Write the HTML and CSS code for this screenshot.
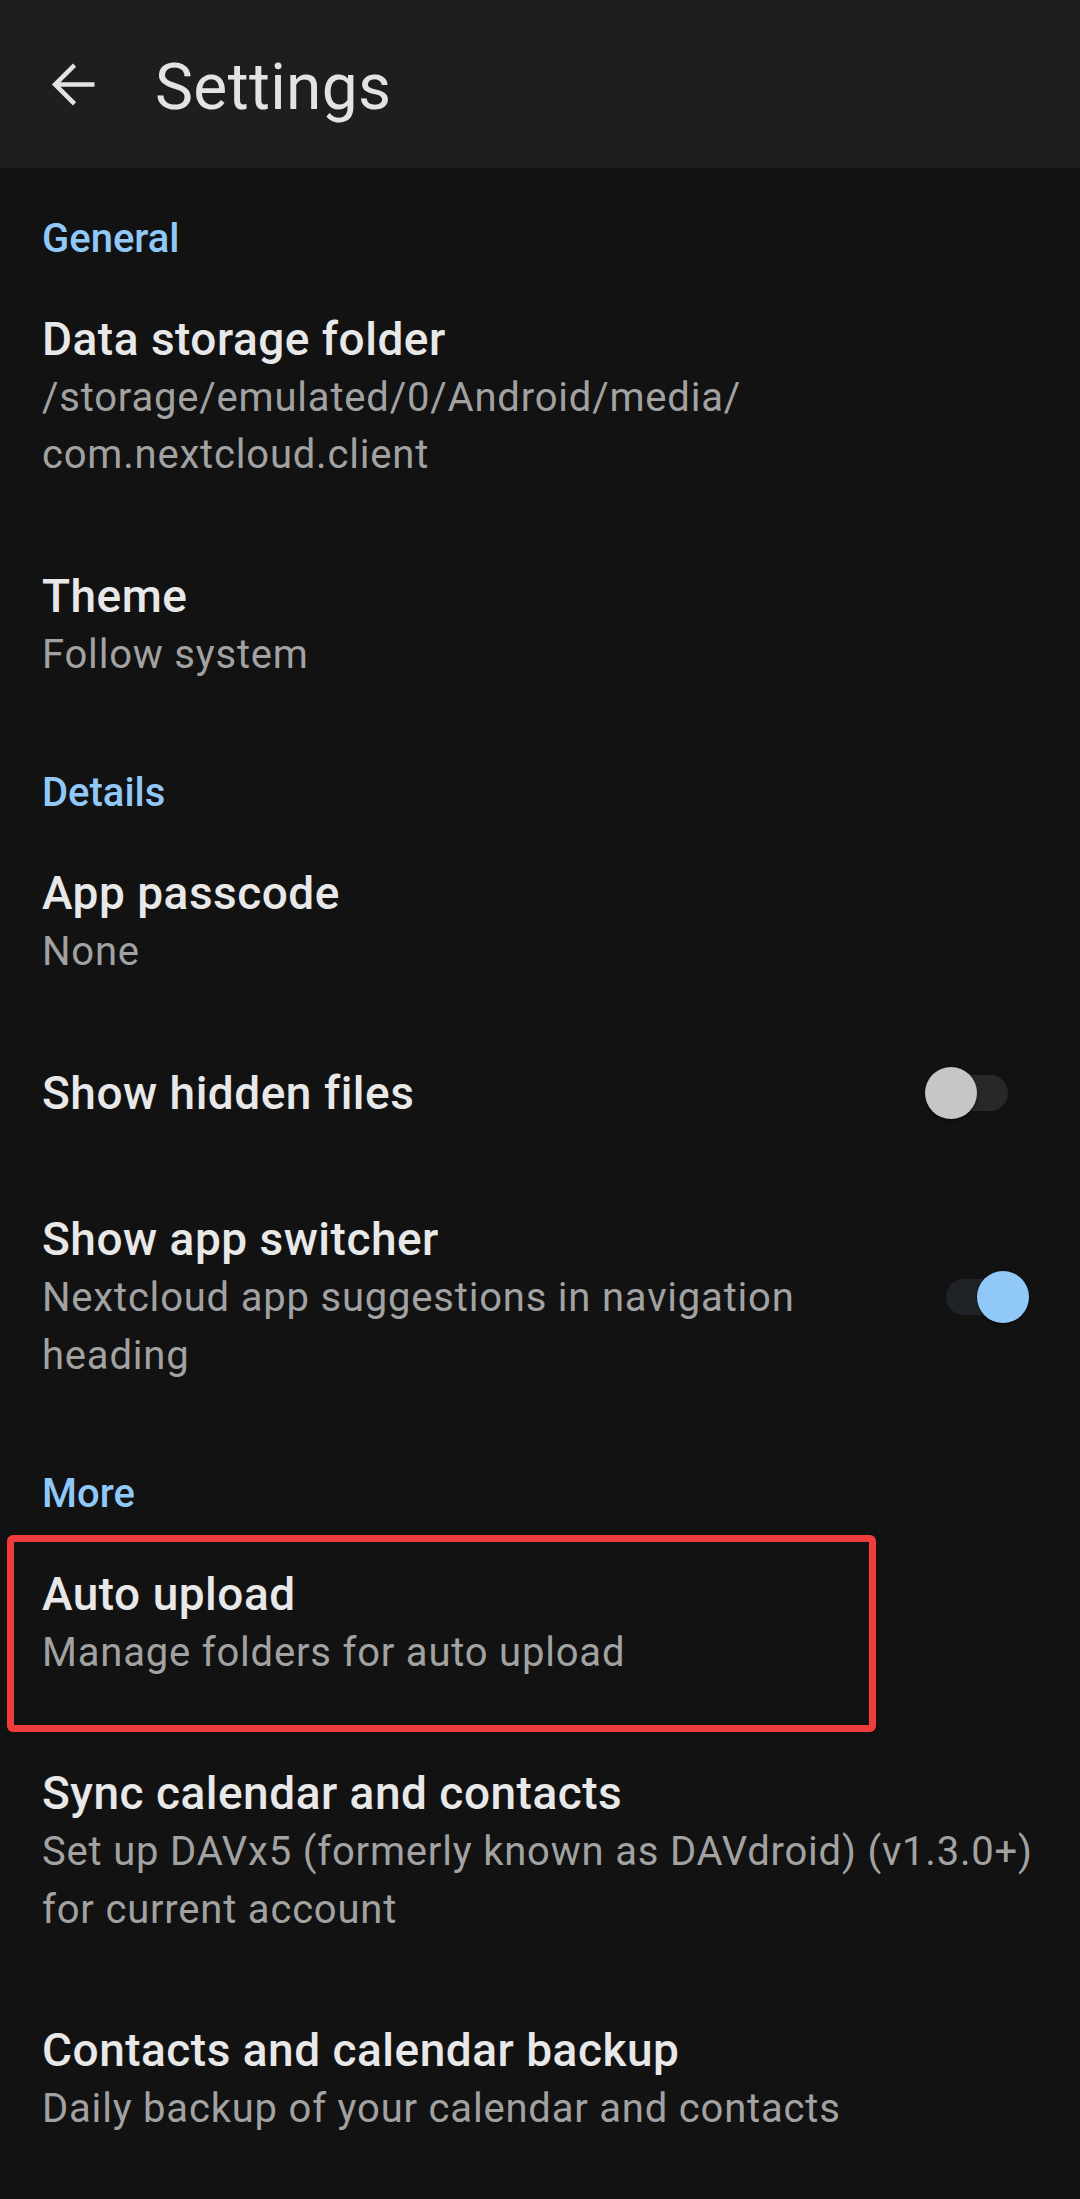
FILE: index.html
```html
<!DOCTYPE html>
<html lang="en">
<head>
<meta charset="utf-8">
<title>Settings</title>
<link rel="stylesheet" href="styles.css">
</head>
<body>
<header class="appbar">
  <span class="back" aria-label="Back">
    <svg viewBox="0 0 24 24" width="63" height="63">
      <path d="M20 12H5.2M12.4 4.6 5 12l7.4 7.4" fill="none" stroke="#e3e3e3" stroke-width="1.75"/>
    </svg>
  </span>
  <h1 class="appbar-title">Settings</h1>
</header>

<main class="list">
  <div class="category">General</div>
  <div class="item">
    <div class="text">
      <div class="title">Data storage folder</div>
      <div class="summary">/storage/<wbr>emulated/<wbr>0/<wbr>Android/<wbr>media/<wbr>com.nextcloud.client</div>
    </div>
  </div>
  <div class="item">
    <div class="text">
      <div class="title">Theme</div>
      <div class="summary">Follow system</div>
    </div>
  </div>

  <div class="category">Details</div>
  <div class="item">
    <div class="text">
      <div class="title">App passcode</div>
      <div class="summary">None</div>
    </div>
  </div>
  <div class="item with-switch single">
    <div class="text">
      <div class="title">Show hidden files</div>
    </div>
    <div class="switch off"><span class="thumb"></span></div>
  </div>
  <div class="item with-switch">
    <div class="text">
      <div class="title">Show app switcher</div>
      <div class="summary">Nextcloud app suggestions in navigation heading</div>
    </div>
    <div class="switch on"><span class="thumb"></span></div>
  </div>

  <div class="category">More</div>
  <div class="item highlighted">
    <div class="text">
      <div class="title">Auto upload</div>
      <div class="summary">Manage folders for auto upload</div>
    </div>
    <span class="highlight-box"></span>
  </div>
  <div class="item">
    <div class="text">
      <div class="title">Sync calendar and contacts</div>
      <div class="summary">Set up DAVx5 (formerly known as DAVdroid) (v1.3.0+) for current account</div>
    </div>
  </div>
  <div class="item">
    <div class="text">
      <div class="title">Contacts and calendar backup</div>
      <div class="summary">Daily backup of your calendar and contacts</div>
    </div>
  </div>
</main>
</body>
</html>
```

FILE: styles.css
```css
* {
  box-sizing: border-box;
}

html, body {
  margin: 0;
  padding: 0;
  background: #121212;
}

body {
  width: 1080px;
  min-height: 2199px;
  font-family: Roboto, "Noto Sans", "Liberation Sans", sans-serif;
  color: #e8e8e8;
  overflow: hidden;
}

.appbar {
  height: 168px;
  background: #1d1e20;
  display: flex;
  align-items: center;
}

.back {
  width: 63px;
  height: 63px;
  margin-left: 42px;
  display: flex;
}

.appbar-title {
  margin: 0 0 0 50px;
  padding-top: 6px;
  font-size: 64px;
  line-height: 75px;
  font-weight: 400;
  color: #e3e3e3;
  letter-spacing: 0.35px;
}

.list {
  padding-top: 2px;
}

.category {
  padding: 40px 42px 0;
  font-size: 40px;
  line-height: 57.5px;
  font-weight: 500;
  color: #90c8f8;
  letter-spacing: 0;
}

.item {
  position: relative;
  padding: 41px 42px;
  display: flex;
  align-items: center;
}

.item.single {
  padding-top: 42px;
  padding-bottom: 45px;
}

.text {
  flex: 1;
  min-width: 0;
}

.title {
  font-size: 46px;
  line-height: 60px;
  font-weight: 500;
  color: #e8e8e8;
  letter-spacing: 0.5px;
}

.summary {
  font-size: 40px;
  line-height: 57.5px;
  font-weight: 400;
  color: #a2a2a2;
  letter-spacing: 0.8px;
}

.switch {
  position: relative;
  flex: none;
  width: 80px;
  height: 36px;
  border-radius: 18px;
  margin-left: 80px;
}

.switch .thumb {
  position: absolute;
  top: -8px;
  width: 52px;
  height: 52px;
  border-radius: 50%;
  box-shadow: 0 2px 3px rgba(0, 0, 0, 0.45);
}

.switch.off {
  background: #282828;
  margin-right: 30px;
}

.switch.off .thumb {
  left: -3px;
  background: #c6c6c6;
}

.switch.on {
  background: #1f2327;
  margin-right: 12px;
}

.switch.on .thumb {
  right: -3px;
  background: #90c8f8;
}

.highlight-box {
  position: absolute;
  left: 7px;
  top: 12px;
  width: 869px;
  height: 197px;
  border: 7px solid #f03c3c;
  border-radius: 6px;
  pointer-events: none;
}
```
